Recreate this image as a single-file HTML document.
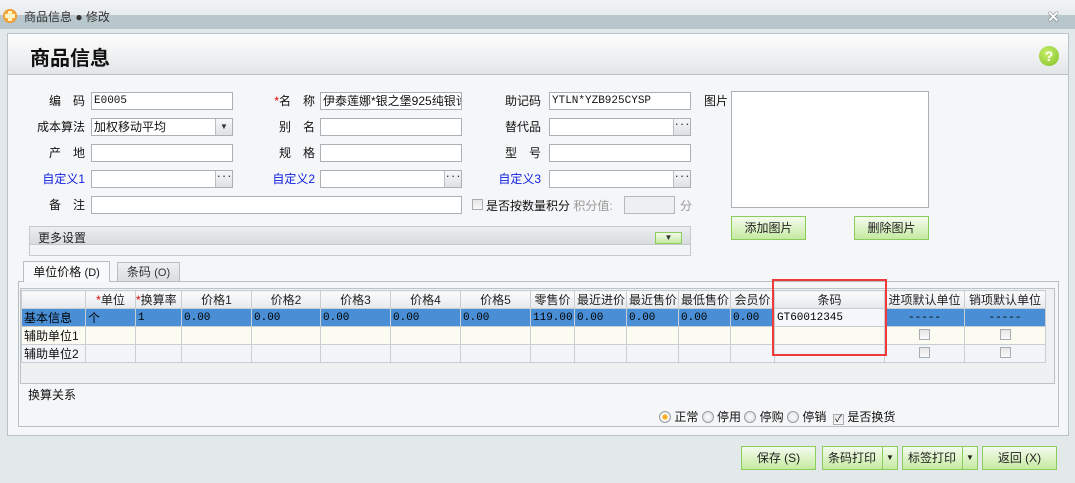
<!DOCTYPE html>
<html><head><meta charset="utf-8">
<style>
*{margin:0;padding:0;box-sizing:border-box}
body{width:1075px;height:483px;overflow:hidden;background:#e3e8ea;font-family:"Liberation Sans","Noto Sans CJK SC",sans-serif;font-size:12px;color:#111;position:relative}
.a{position:absolute}
.inp{position:absolute;background:#fff;border:1px solid #a9b0b6;height:18px;font-family:"Liberation Mono","Noto Sans CJK SC",monospace;font-size:11px;line-height:16px;padding-left:2px;white-space:nowrap;overflow:hidden}
.dots{position:absolute;top:0;right:0;width:17px;height:16px;border-left:1px solid #b8bec3;background:linear-gradient(#f6f7f8,#dde1e4);font-size:9px;text-align:center;line-height:12px;font-weight:bold;color:#333}
.lbl{position:absolute;font-size:12px;text-align:right;line-height:18px}
.blue{color:#1020e0}
.gbtn{position:absolute;border:1px solid #8ccc5c;background:linear-gradient(#f4fbee,#c5eaa0);text-align:center;font-size:12px;color:#222}
table{border-collapse:collapse;table-layout:fixed}
td{border:1px solid #c9ced3;height:18px;font-size:12px;padding:0 2px;white-space:nowrap;overflow:hidden}
.hd td{background:linear-gradient(#fbfbfc,#e6e9ec);text-align:center;color:#222}
.sel td{background:#4a8fd6;color:#000;font-family:"Liberation Mono","Noto Sans CJK SC",monospace;font-size:11px}
.r2 td{background:#fcfbf2}
.r3 td{background:#f1f4f9}
.cb{display:inline-block;width:11px;height:11px;border:1px solid #a9adb1;background:linear-gradient(#e6e6e6,#fafafa)}
.rad{display:inline-block;width:12px;height:12px;border-radius:50%;border:1px solid #9a9ea2;background:radial-gradient(#fff,#d6d8da);vertical-align:-2px}
.req{color:#e00000}
</style></head><body>
<!-- title bar -->
<div class="a" style="left:0;top:0;width:1075px;height:15px;background:linear-gradient(#f1f3f4,#e8ecee)"></div>
<div class="a" style="left:0;top:15px;width:1075px;height:14px;background:#b8c7cc"></div>
<div class="a" style="left:3px;top:9px;width:14px;height:14px;border-radius:50%;background:radial-gradient(#ffd36b,#e87c10)"></div>
<div class="a" style="left:8px;top:11px;width:4px;height:10px;background:#fff3c0"></div>
<div class="a" style="left:5px;top:14px;width:10px;height:4px;background:#fff3c0"></div>
<div class="a" style="left:24px;top:8px;font-size:12px;color:#333">商品信息 ● 修改</div>
<div class="a" style="left:1047px;top:8px;font-size:15px;font-weight:bold;color:#fff;text-shadow:0 0 1px #333,0 0 1px #333">✕</div>
<!-- main panel -->
<div class="a" style="left:7px;top:33px;width:1062px;height:403px;background:#f5f6f8;border:1px solid #b9c3c8"></div>
<div class="a" style="left:8px;top:34px;width:1060px;height:41px;background:linear-gradient(#fdfdfd,#e3e6e8);border-bottom:1px solid #b9c0c5"></div>
<div class="a" style="left:30px;top:42px;font-size:20px;font-weight:bold;color:#111">商品信息</div>
<div class="a" style="left:1039px;top:46px;width:20px;height:20px;border-radius:50%;background:radial-gradient(circle at 40% 35%,#c9ef6c,#7fc024);color:#fff;font-weight:bold;font-size:14px;text-align:center;line-height:20px">?</div>

<!-- form -->
<div class="lbl" style="left:30px;top:92px;width:55px">编　码</div>
<div class="inp" style="left:91px;top:92px;width:142px">E0005</div>
<div class="lbl" style="left:30px;top:118px;width:55px">成本算法</div>
<div class="inp" style="left:91px;top:118px;width:142px;font-family:'Liberation Sans','Noto Sans CJK SC',sans-serif;font-size:12px">加权移动平均<div class="dots" style="font-size:8px;line-height:16px">▼</div></div>
<div class="lbl" style="left:30px;top:144px;width:55px">产　地</div>
<div class="inp" style="left:91px;top:144px;width:142px"></div>
<div class="lbl blue" style="left:30px;top:170px;width:55px">自定义1</div>
<div class="inp" style="left:91px;top:170px;width:142px"><div class="dots">···</div></div>
<div class="lbl" style="left:30px;top:196px;width:55px">备　注</div>
<div class="inp" style="left:91px;top:196px;width:371px"></div>

<div class="lbl" style="left:255px;top:92px;width:60px"><span class="req">*</span>名　称</div>
<div class="inp" style="left:320px;top:92px;width:142px;font-family:'Liberation Sans','Noto Sans CJK SC',sans-serif;font-size:12px">伊泰莲娜*银之堡925纯银许</div>
<div class="lbl" style="left:255px;top:118px;width:60px">别　名</div>
<div class="inp" style="left:320px;top:118px;width:142px"></div>
<div class="lbl" style="left:255px;top:144px;width:60px">规　格</div>
<div class="inp" style="left:320px;top:144px;width:142px"></div>
<div class="lbl blue" style="left:255px;top:170px;width:60px">自定义2</div>
<div class="inp" style="left:320px;top:170px;width:142px"><div class="dots">···</div></div>

<div class="lbl" style="left:480px;top:92px;width:61px">助记码</div>
<div class="inp" style="left:549px;top:92px;width:142px">YTLN*YZB925CYSP</div>
<div class="lbl" style="left:480px;top:118px;width:61px">替代品</div>
<div class="inp" style="left:549px;top:118px;width:142px"><div class="dots">···</div></div>
<div class="lbl" style="left:480px;top:144px;width:61px">型　号</div>
<div class="inp" style="left:549px;top:144px;width:142px"></div>
<div class="lbl blue" style="left:480px;top:170px;width:61px">自定义3</div>
<div class="inp" style="left:549px;top:170px;width:142px"><div class="dots">···</div></div>
<div class="a" style="left:472px;top:199px"><span class="cb"></span></div>
<div class="a" style="left:486px;top:197px;font-size:12px">是否按数量积分 <span style="color:#999">积分值:</span></div>
<div class="a" style="left:624px;top:196px;width:51px;height:18px;border:1px solid #b5b9bd;background:#eeeff0"></div>
<div class="a" style="left:680px;top:197px;color:#999">分</div>

<div class="a" style="left:704px;top:92px">图片</div>
<div class="a" style="left:731px;top:91px;width:198px;height:117px;background:#fff;border:1px solid #a9b0b6"></div>
<div class="gbtn" style="left:731px;top:216px;width:75px;height:24px;line-height:22px">添加图片</div>
<div class="gbtn" style="left:854px;top:216px;width:75px;height:24px;line-height:22px">删除图片</div>

<div class="a" style="left:29px;top:226px;width:662px;height:30px;border:1px solid #c5cace;background:#f3f4f6"></div>
<div class="a" style="left:30px;top:227px;width:660px;height:18px;background:linear-gradient(#eceef0,#d8dcdf);border-bottom:1px solid #c5cace"></div>
<div class="a" style="left:38px;top:229px;color:#222">更多设置</div>
<div class="a" style="left:655px;top:232px;width:27px;height:12px;border:1px solid #8ccc5c;background:linear-gradient(#f4fbee,#c5eaa0);font-size:8px;text-align:center;line-height:10px;color:#333">▼</div>

<!-- tabs -->
<div class="a" style="left:18px;top:281px;width:1041px;height:146px;border:1px solid #b8bfc4;background:#f5f6f8"></div>
<div class="a" style="left:23px;top:261px;width:87px;height:21px;border:1px solid #b8bfc4;border-bottom:none;background:#f8f9fa;text-align:center;line-height:20px">单位价格 <span style="font-size:11px">(D)</span></div>
<div class="a" style="left:117px;top:262px;width:63px;height:20px;border:1px solid #b8bfc4;background:linear-gradient(#eef0f2,#d9dde0);text-align:center;line-height:19px;color:#333">条码 <span style="font-size:11px">(O)</span></div>

<div class="a" style="left:20px;top:288px;width:1035px;height:96px;border:1px solid #bcc3c8;background:#eef0f2"></div>
<table class="a" style="left:21px;top:290px;width:1024px">
<colgroup><col style="width:64px"><col style="width:50px"><col style="width:46px"><col style="width:70px"><col style="width:69px"><col style="width:70px"><col style="width:70px"><col style="width:70px"><col style="width:44px"><col style="width:52px"><col style="width:52px"><col style="width:52px"><col style="width:44px"><col style="width:110px"><col style="width:80px"><col style="width:81px"></colgroup>
<tr class="hd"><td></td><td><span class="req">*</span>单位</td><td style="text-align:left;padding:0"><span class="req">*</span>换算率</td><td>价格1</td><td>价格2</td><td>价格3</td><td>价格4</td><td>价格5</td><td>零售价</td><td>最近进价</td><td>最近售价</td><td>最低售价</td><td>会员价</td><td>条码</td><td>进项默认单位</td><td>销项默认单位</td></tr>
<tr class="sel"><td style="font-family:'Liberation Sans','Noto Sans CJK SC',sans-serif;font-size:12px">基本信息</td><td style="font-family:'Liberation Sans','Noto Sans CJK SC',sans-serif;font-size:12px">个</td><td>1</td><td>0.00</td><td>0.00</td><td>0.00</td><td>0.00</td><td>0.00</td><td>119.00</td><td>0.00</td><td>0.00</td><td>0.00</td><td>0.00</td><td style="background:#f4f7fb;border:1px dotted #333">GT60012345</td><td style="text-align:center">-----</td><td style="text-align:center">-----</td></tr>
<tr class="r2"><td>辅助单位1</td><td></td><td></td><td></td><td></td><td></td><td></td><td></td><td></td><td></td><td></td><td></td><td></td><td></td><td style="text-align:center"><span class="cb"></span></td><td style="text-align:center"><span class="cb"></span></td></tr>
<tr class="r3"><td>辅助单位2</td><td></td><td></td><td></td><td></td><td></td><td></td><td></td><td></td><td></td><td></td><td></td><td></td><td></td><td style="text-align:center"><span class="cb"></span></td><td style="text-align:center"><span class="cb"></span></td></tr>
</table>
<div class="a" style="left:772px;top:279px;width:115px;height:77px;border:2px solid #f03a3a"></div>

<div class="a" style="left:28px;top:386px">换算关系</div>
<div class="a" style="left:659px;top:408px;font-size:12px;white-space:nowrap"><span class="rad" style="background:radial-gradient(#ffb020 30%,#fff 45%,#d6d8da)"></span> 正常 <span class="rad"></span> 停用 <span class="rad"></span> 停购 <span class="rad"></span> 停销 &nbsp;<span class="cb" style="font-size:10px;line-height:9px;text-align:center;vertical-align:-1px">✓</span> 是否换货</div>

<!-- bottom buttons -->
<div class="gbtn" style="left:741px;top:446px;width:75px;height:24px;line-height:22px">保存 (S)</div>
<div class="gbtn" style="left:822px;top:446px;width:76px;height:24px;line-height:22px;text-align:left;padding-left:5px">条码打印<span class="a" style="left:59px;top:0;width:15px;height:22px;border-left:1px solid #8ccc5c;font-size:8px;text-align:center">▼</span></div>
<div class="gbtn" style="left:902px;top:446px;width:76px;height:24px;line-height:22px;text-align:left;padding-left:5px">标签打印<span class="a" style="left:59px;top:0;width:15px;height:22px;border-left:1px solid #8ccc5c;font-size:8px;text-align:center">▼</span></div>
<div class="gbtn" style="left:982px;top:446px;width:75px;height:24px;line-height:22px">返回 (X)</div>
</body></html>
